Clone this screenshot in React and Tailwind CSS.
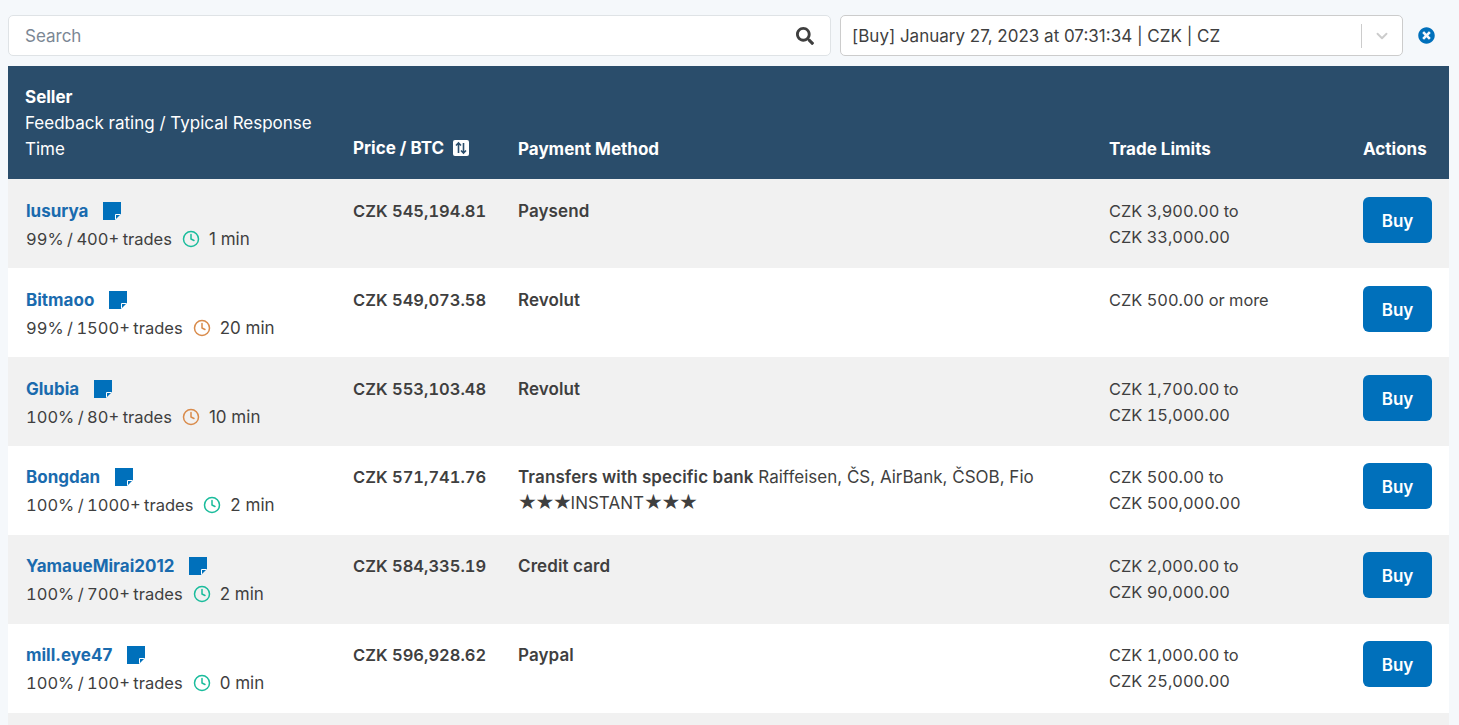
import React from 'react';
import { Clock, ChevronDown } from 'lucide-react';
import { FaSearch, FaTimesCircle } from 'react-icons/fa';

const offers = [
  { name: 'lusurya', rating: '99% / 400+ trades', time: '1 min', fast: true, price: 'CZK 545,194.81', method: 'Paysend', limits: ['CZK 3,900.00 to', 'CZK 33,000.00'] },
  { name: 'Bitmaoo', rating: '99% / 1500+ trades', time: '20 min', fast: false, price: 'CZK 549,073.58', method: 'Revolut', limits: ['CZK 500.00 or more'] },
  { name: 'Glubia', rating: '100% / 80+ trades', time: '10 min', fast: false, price: 'CZK 553,103.48', method: 'Revolut', limits: ['CZK 1,700.00 to', 'CZK 15,000.00'] },
  { name: 'Bongdan', rating: '100% / 1000+ trades', time: '2 min', fast: true, price: 'CZK 571,741.76', method: 'Transfers with specific bank', note: ' Raiffeisen, ČS, AirBank, ČSOB, Fio', instant: true, limits: ['CZK 500.00 to', 'CZK 500,000.00'] },
  { name: 'YamaueMirai2012', rating: '100% / 700+ trades', time: '2 min', fast: true, price: 'CZK 584,335.19', method: 'Credit card', limits: ['CZK 2,000.00 to', 'CZK 90,000.00'] },
  { name: 'mill.eye47', rating: '100% / 100+ trades', time: '0 min', fast: true, price: 'CZK 596,928.62', method: 'Paypal', limits: ['CZK 1,000.00 to', 'CZK 25,000.00'] },
];

const cols = 'grid w-[1441px] grid-cols-[328px_165px_591px_254px_103px]';

function SortIcon() {
  return (
    <svg viewBox="0 0 16 16" className="ml-[9px] h-4 w-4">
      <rect x="0" y="0" width="16" height="16" rx="2" fill="#fff" />
      <path d="M5.5 3 L5.5 13 M3 5.5 L5.5 3 L8 5.5" stroke="#2a4d6b" strokeWidth="1.6" fill="none" />
      <path d="M10.5 3 L10.5 13 M8 10.5 L10.5 13 L13 10.5" stroke="#2a4d6b" strokeWidth="1.6" fill="none" />
    </svg>
  );
}

function NoteIcon() {
  return (
    <svg viewBox="0 0 18 18" className="ml-[15px] h-[18px] w-[18px]">
      <path d="M0 0H18V12L12 18H0Z" fill="#0070bb" />
      <path d="M17.5 12.5H12.5V17.5" stroke="#fff" strokeWidth="1" fill="none" />
    </svg>
  );
}

function OfferRow({ offer, striped }) {
  return (
    <div className={`${cols} h-[88.9px] text-[17px] leading-[26px] text-[#3f3f3f] ${striped ? 'bg-[#f1f1f1]' : 'bg-white'}`}>
      <div className="pl-[18px] pt-[18.55px]">
        <div className="flex h-[26px] items-center">
          <a className="font-bold text-[#1a6bae]">{offer.name}</a>
          <NoteIcon />
        </div>
        <div className="mt-px flex h-[28px] items-center">
          <span className="tabular-nums text-[16.5px] [word-spacing:-1px]">{offer.rating}</span>
          <Clock className={`ml-[10px] h-[18px] w-[18px] ${offer.fast ? 'text-[#1abc9c]' : 'text-[#d98b4b]'}`} strokeWidth={2} />
          <span className="ml-[9px]">{offer.time}</span>
        </div>
      </div>
      <div className="pl-[17px] pt-[18.55px] text-[16.5px] font-semibold tabular-nums">{offer.price}</div>
      <div className="pl-[17px] pr-[40px] pt-[18.55px]">
        <span className="font-semibold tracking-[0.1px]">{offer.method}</span>
        {offer.note}
        {offer.instant && (
          <div>
            <span className="font-['DejaVu_Sans'] text-[21px] leading-none tracking-[-1.3px]">★★★</span>
            INSTANT
            <span className="font-['DejaVu_Sans'] text-[21px] leading-none tracking-[-1.3px]">★★★</span>
          </div>
        )}
      </div>
      <div className="pl-[17px] pt-[18.55px] text-[16.4px] tabular-nums">
        {offer.limits.map((line) => (
          <div key={line}>{line}</div>
        ))}
      </div>
      <div className="pl-[17px] pt-[17.55px]">
        <button className="h-[46px] w-[69px] rounded-md bg-[#0070bb] pt-[2px] font-semibold text-white">Buy</button>
      </div>
    </div>
  );
}

export default function App() {
  return (
    <div className="min-h-[725px] overflow-hidden bg-[#f5f8fb] px-2 pt-[15px] font-['Inter','Open_Sans',sans-serif]">
      <div className="flex h-[41px] items-stretch text-[17px]">
        <div className="flex w-[823px] items-center justify-between rounded-[5px] border border-[#dfe3e6] bg-white pl-4 pr-[16px]">
          <span className="pt-[2px] text-[#7b8794]">Search</span>
          <FaSearch className="h-[18px] w-[18px] text-[#3f3f3f]" />
        </div>
        <div className="ml-[9px] flex w-[563px] items-center rounded-[5px] border border-[#cccccc] bg-white pl-[11px]">
          <span className="flex-1 pt-[2px] text-[#3f3f3f]">[Buy] January 27, 2023 at 07:31:34 | CZK | CZ</span>
          <span className="h-[24px] w-px bg-[#cccccc]" />
          <ChevronDown className="mx-[11px] h-[18px] w-[18px] text-[#cccccc]" strokeWidth={2.5} />
        </div>
        <div className="ml-[15px] flex items-center">
          <FaTimesCircle className="h-[17px] w-[17px] text-[#0070bb]" />
        </div>
      </div>
      <div className="mt-[10px]">
        <div className={`${cols} h-[113.2px] bg-[#2a4d6b] text-[17px] leading-[26px] text-white`}>
          <div className="pl-[17px] pt-[18px]">
            <div className="font-bold">Seller</div>
            <div className="w-[300px]">Feedback rating / Typical Response Time</div>
          </div>
          <div className="flex items-end pb-[18px] pl-[17px] font-bold">
            Price / BTC
            <span className="mb-[5px]"><SortIcon /></span>
          </div>
          <div className="flex items-end pb-[17px] pl-[17px] font-bold">Payment Method</div>
          <div className="flex items-end pb-[17px] pl-[17px] font-bold">Trade Limits</div>
          <div className="flex items-end pb-[17px] pl-[17px] font-bold">Actions</div>
        </div>
        {offers.map((offer, i) => (
          <OfferRow key={offer.name} offer={offer} striped={i % 2 === 0} />
        ))}
        <div className="h-[12px] w-[1441px] bg-[#f1f1f1]" />
      </div>
    </div>
  );
}
